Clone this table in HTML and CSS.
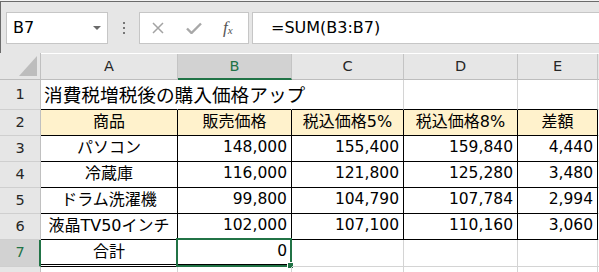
FILE: index.html
```html
<!DOCTYPE html>
<html lang="ja">
<head>
<meta charset="utf-8">
<title>Excel</title>
<link rel="stylesheet" href="styles.css">
</head>
<body>
<div class="app">
  <div class="toolbar">
    <div class="namebox"><span class="ref">B7</span><span class="caret"></span></div>
    <div class="dots"><i></i><i></i><i></i></div>
    <div class="fbtns">
      <svg class="ic-x" width="12" height="12" viewBox="0 0 12 12"><path d="M1 1L11 11M11 1L1 11" stroke="#a3a3a3" stroke-width="1.5" fill="none"/></svg>
      <svg class="ic-ok" width="16" height="12" viewBox="0 0 16 12"><path d="M1 6.5L5.5 11L15 1.5" stroke="#a8a8a8" stroke-width="2.4" fill="none"/></svg>
      <span class="fx"><i>f</i><sub>x</sub></span>
    </div>
    <div class="formula">=SUM(B3:B7)</div>
  </div>
  <div class="sheet">
    <div class="corner"><svg width="18" height="20" viewBox="0 0 18 20"><polygon points="18,0 18,20 0,20" fill="#bdbdbd"/></svg></div>
    <div class="ch">A</div>
    <div class="ch sel">B</div>
    <div class="ch">C</div>
    <div class="ch">D</div>
    <div class="ch">E</div>
    <div class="ch last"></div>

    <div class="rh">1</div>
    <div class="c title nob">消費税増税後の購入価格アップ</div>
    <div class="c nob bb"></div>
    <div class="c bb"></div>
    <div class="c bb"></div>
    <div class="c bb"></div>
    <div class="c last"></div>

    <div class="rh">2</div>
    <div class="c k hd">商品</div>
    <div class="c k hd">販売価格</div>
    <div class="c k hd">税込価格5%</div>
    <div class="c k hd">税込価格8%</div>
    <div class="c k hd">差額</div>
    <div class="c last"></div>

    <div class="rh">3</div>
    <div class="c k ctr">パソコン</div>
    <div class="c k num">148,000</div>
    <div class="c k num">155,400</div>
    <div class="c k num">159,840</div>
    <div class="c k num">4,440</div>
    <div class="c last"></div>

    <div class="rh">4</div>
    <div class="c k ctr">冷蔵庫</div>
    <div class="c k num">116,000</div>
    <div class="c k num">121,800</div>
    <div class="c k num">125,280</div>
    <div class="c k num">3,480</div>
    <div class="c last"></div>

    <div class="rh">5</div>
    <div class="c k ctr">ドラム洗濯機</div>
    <div class="c k num">99,800</div>
    <div class="c k num">104,790</div>
    <div class="c k num">107,784</div>
    <div class="c k num">2,994</div>
    <div class="c last"></div>

    <div class="rh">6</div>
    <div class="c k ctr">液晶TV50インチ</div>
    <div class="c k num">102,000</div>
    <div class="c k num">107,100</div>
    <div class="c k num">110,160</div>
    <div class="c k num">3,060</div>
    <div class="c last"></div>

    <div class="rh rsel">7</div>
    <div class="c k dbl ctr">合計</div>
    <div class="c k dbl num active">0<span class="selbox"><span class="handle"></span></span></div>
    <div class="c"></div>
    <div class="c"></div>
    <div class="c"></div>
    <div class="c last"></div>

    <div class="rh"></div>
    <div class="c"></div>
    <div class="c"></div>
    <div class="c"></div>
    <div class="c"></div>
    <div class="c"></div>
    <div class="c last"></div>
  </div>
</div>
</body>
</html>
```

FILE: styles.css
```css
* { box-sizing: border-box; }
html, body { margin: 0; padding: 0; }
body { background: #f2f2f2; }

.app {
  width: 599px;
  height: 272px;
  overflow: hidden;
  padding-top: 1px;
  font-family: "DejaVu Sans", "Noto Sans CJK JP", sans-serif;
  color: #000;
}

.toolbar {
  height: 52px;
  background: #e6e6e6;
  border-top: 1px solid #6b6b6b;
  border-left: 1px solid #6b6b6b;
  padding: 10px 0 0 5px;
  display: flex;
  align-items: flex-start;
}

.namebox {
  width: 102px;
  height: 32px;
  background: #fff;
  border: 1px solid #c6c6c6;
  position: relative;
  display: flex;
  align-items: center;
  padding-left: 6px;
}
.namebox .ref { font-size: 16px; line-height: 1; }
.namebox .caret {
  position: absolute;
  right: 6px;
  top: 13px;
  width: 0; height: 0;
  border-left: 4px solid transparent;
  border-right: 4px solid transparent;
  border-top: 4px solid #6a6a6a;
}

.dots {
  width: 31px;
  height: 32px;
  display: flex;
  flex-direction: column;
  align-items: center;
  justify-content: center;
  gap: 3px;
  padding-left: 1px;
}
.dots i { display: block; width: 2px; height: 2px; background: #777; }

.fbtns {
  width: 110px;
  height: 32px;
  background: #fff;
  border: 1px solid #c6c6c6;
  display: flex;
  align-items: center;
  padding-left: 12px;
}
.ic-x { margin-right: 22px; }
.ic-ok { margin-right: 21px; }
.fx { font-family: "Liberation Serif", serif; color: #555; font-size: 17px; line-height: 1; position: relative; top: -1px; }
.fx i { font-style: italic; }
.fx sub { font-style: italic; font-size: 11px; vertical-align: -1px; }

.formula {
  margin-left: 3px;
  flex: 1;
  height: 32px;
  background: #fff;
  border: 1px solid #c6c6c6;
  border-right: none;
  font-size: 16px;
  line-height: 30px;
  padding-left: 18px;
}

.sheet {
  display: grid;
  grid-template-columns: 41px 137px 114px 112px 114px 80px 1fr;
  grid-template-rows: 27px 30px 26px 26px 26px 26px 26px 27px 26px;
  background: #fff;
}

.corner {
  background: #e6e6e6;
  border-right: 1px solid #c0c0c0;
  border-bottom: 1px solid #bdbdbd;
  display: flex;
  justify-content: flex-end;
  align-items: flex-end;
  padding: 0 3px 3px 0;
}

.ch {
  background: #e6e6e6;
  border-right: 1px solid #c4c4c4;
  border-bottom: 1px solid #bdbdbd;
  font-size: 14.5px;
  color: #262626;
  display: flex;
  align-items: center;
  justify-content: center;
  margin-top: 1px;
  padding-bottom: 1px;
}
.ch.sel { background: #d2d2d2; color: #217346; border-bottom: 2px solid #217346; }
.ch.last { border-right: none; }

.rh {
  background: #e6e6e6;
  border-right: 1px solid #c0c0c0;
  border-bottom: 1px solid #cfcfcf;
  font-size: 14.5px;
  color: #262626;
  display: flex;
  align-items: center;
  justify-content: center;
  padding-bottom: 2px;
}
.rh.rsel { background: #d2d2d2; color: #217346; border-right: 2px solid #217346; padding-left: 1px; }

.c {
  border-right: 1px solid #d4d4d4;
  border-bottom: 1px solid #d4d4d4;
  font-size: 16px;
  line-height: 1;
  display: flex;
  align-items: center;
  white-space: nowrap;
  position: relative;
  padding-bottom: 1px;
}
.c.last { border-right: none; }
.c.nob { border-right-color: transparent; }
.c.bb { border-bottom-color: #000; }
.c.title {
  font-family: "Noto Sans CJK JP", sans-serif;
  font-size: 18.67px;
  padding-left: 3px;
  overflow: visible;
  border-bottom-color: #000;
  z-index: 1;
  padding-bottom: 1px;
}
.c.k { border-right-color: #000; border-bottom-color: #000; }
.c.hd { background: #fff2cc; justify-content: center; }
.c.ctr { justify-content: center; }
.c.num { justify-content: flex-end; padding-right: 4px; font-size: 15.5px; }
.c.dbl { border-bottom: 3px double #000; }

.selbox {
  position: absolute;
  left: -2px;
  top: -2px;
  width: 116px;
  height: 29px;
  border: 2px solid #217346;
  pointer-events: none;
}
.handle {
  position: absolute;
  right: -4px;
  bottom: -4px;
  width: 7px;
  height: 7px;
  background: #217346;
  border: 1px solid #fff;
}
```
